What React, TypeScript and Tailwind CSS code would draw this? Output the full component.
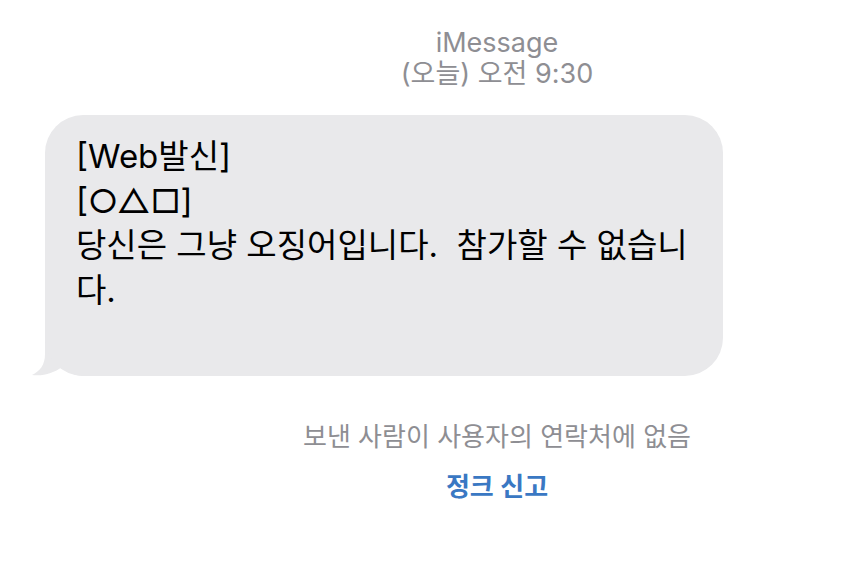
export default function App() {
	const meta = "flex w-[400px] ml-[297px] flex-col items-center text-[#8e8e93]";

	return (
		<div
			className="w-[864px] h-[566px] bg-white flex flex-col overflow-hidden"
			style={{ fontFamily: 'Inter, "Noto Sans CJK KR", "Noto Sans", sans-serif' }}
		>
			{/* header */}
			<div className={`${meta} pt-[27px] text-[27px] leading-[31px]`}>
				<span>iMessage</span>
				<span>(오늘) 오전 9:30</span>
			</div>

			{/* bubble */}
			<div className="relative mt-[26px] ml-[45px] w-[678px] h-[261px]">
				<svg
					className="absolute left-[-14px] bottom-0"
					width="60"
					height="46"
					viewBox="0 0 60 46"
				>
					<path
						d="M14 0 V24 C14 35 9 41 1 45 C12 46.5 23 43 31 37 C37 42 44 46 52 46 H60 V0 Z"
						fill="#e9e9eb"
					/>
				</svg>
				<div className="relative h-full rounded-[38px] bg-[#e9e9eb] pl-[31px] pt-[19px] text-[33px] leading-[44.5px] text-black">
					<div>[Web발신]</div>
					<div>[○△□]</div>
					<div>당신은 그냥 오징어입니다.&nbsp; 참가할 수 없습니</div>
					<div>다.</div>
				</div>
			</div>

			{/* footer */}
			<div className={`${meta} mt-[46px] text-[26px] leading-[30px]`}>
				<span className="whitespace-nowrap">보낸 사람이 사용자의 연락처에 없음</span>
			</div>
			<div className="flex w-[400px] ml-[297px] justify-center mt-[19px]">
				<span className="text-[26px] leading-[31px] font-semibold text-[#3a78c3]">
					정크 신고
				</span>
			</div>
		</div>
	);
}
